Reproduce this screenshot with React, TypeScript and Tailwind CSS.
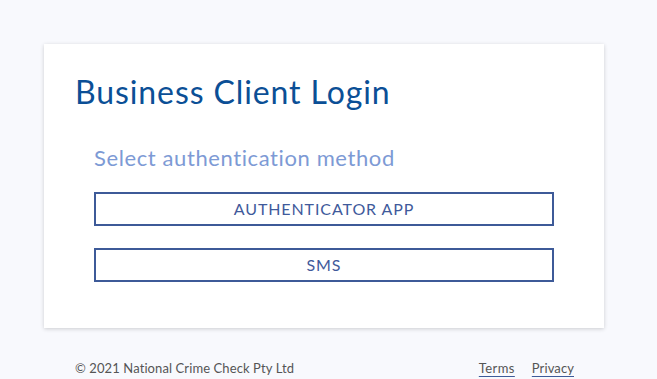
import React from "react";

export default function App() {
  return (
    <div className="min-h-[379px] w-full bg-[#f8f9fd] pt-[44px] px-[44px] [font-family:Lato,'Open_Sans',sans-serif]">
      <div className="w-[560px] bg-white shadow-[0_1px_4px_rgba(0,0,0,0.18)] pt-[28px] pb-[46px] px-[31px]">
        <h1 className="text-[32px] leading-[40px] text-[#0b4f96] font-normal tracking-[0.9px]">Business Client Login</h1>
        <div className="px-[19px] mt-[32px]">
          <div className="text-[22px] leading-[28px] text-[#7d9ad5] tracking-[0.6px]">Select authentication method</div>
          <div className="mt-[20px] flex flex-col gap-[22px]">
            <button className="h-[34px] w-full border-2 border-[#3d5a98] text-[#3f5a9b] text-[16px] tracking-[0.9px] uppercase">Authenticator App</button>
            <button className="h-[34px] w-full border-2 border-[#3d5a98] text-[#3f5a9b] text-[16px] tracking-[0.9px] uppercase">SMS</button>
          </div>
        </div>
      </div>
      <div className="w-[560px] flex items-center justify-between pl-[31px] pr-[30px] mt-[31px] text-[13px] text-[#555] tracking-[0.1px]">
        <span>© 2021 National Crime Check Pty Ltd</span>
        <div className="flex gap-[17px]">
          <a className="underline decoration-[#3d5a98] underline-offset-[3px] text-[#555] tracking-[0.4px]">Terms</a>
          <a className="underline decoration-[#3d5a98] underline-offset-[3px] text-[#555] tracking-[0.1px]">Privacy</a>
        </div>
      </div>
    </div>
  );
}
